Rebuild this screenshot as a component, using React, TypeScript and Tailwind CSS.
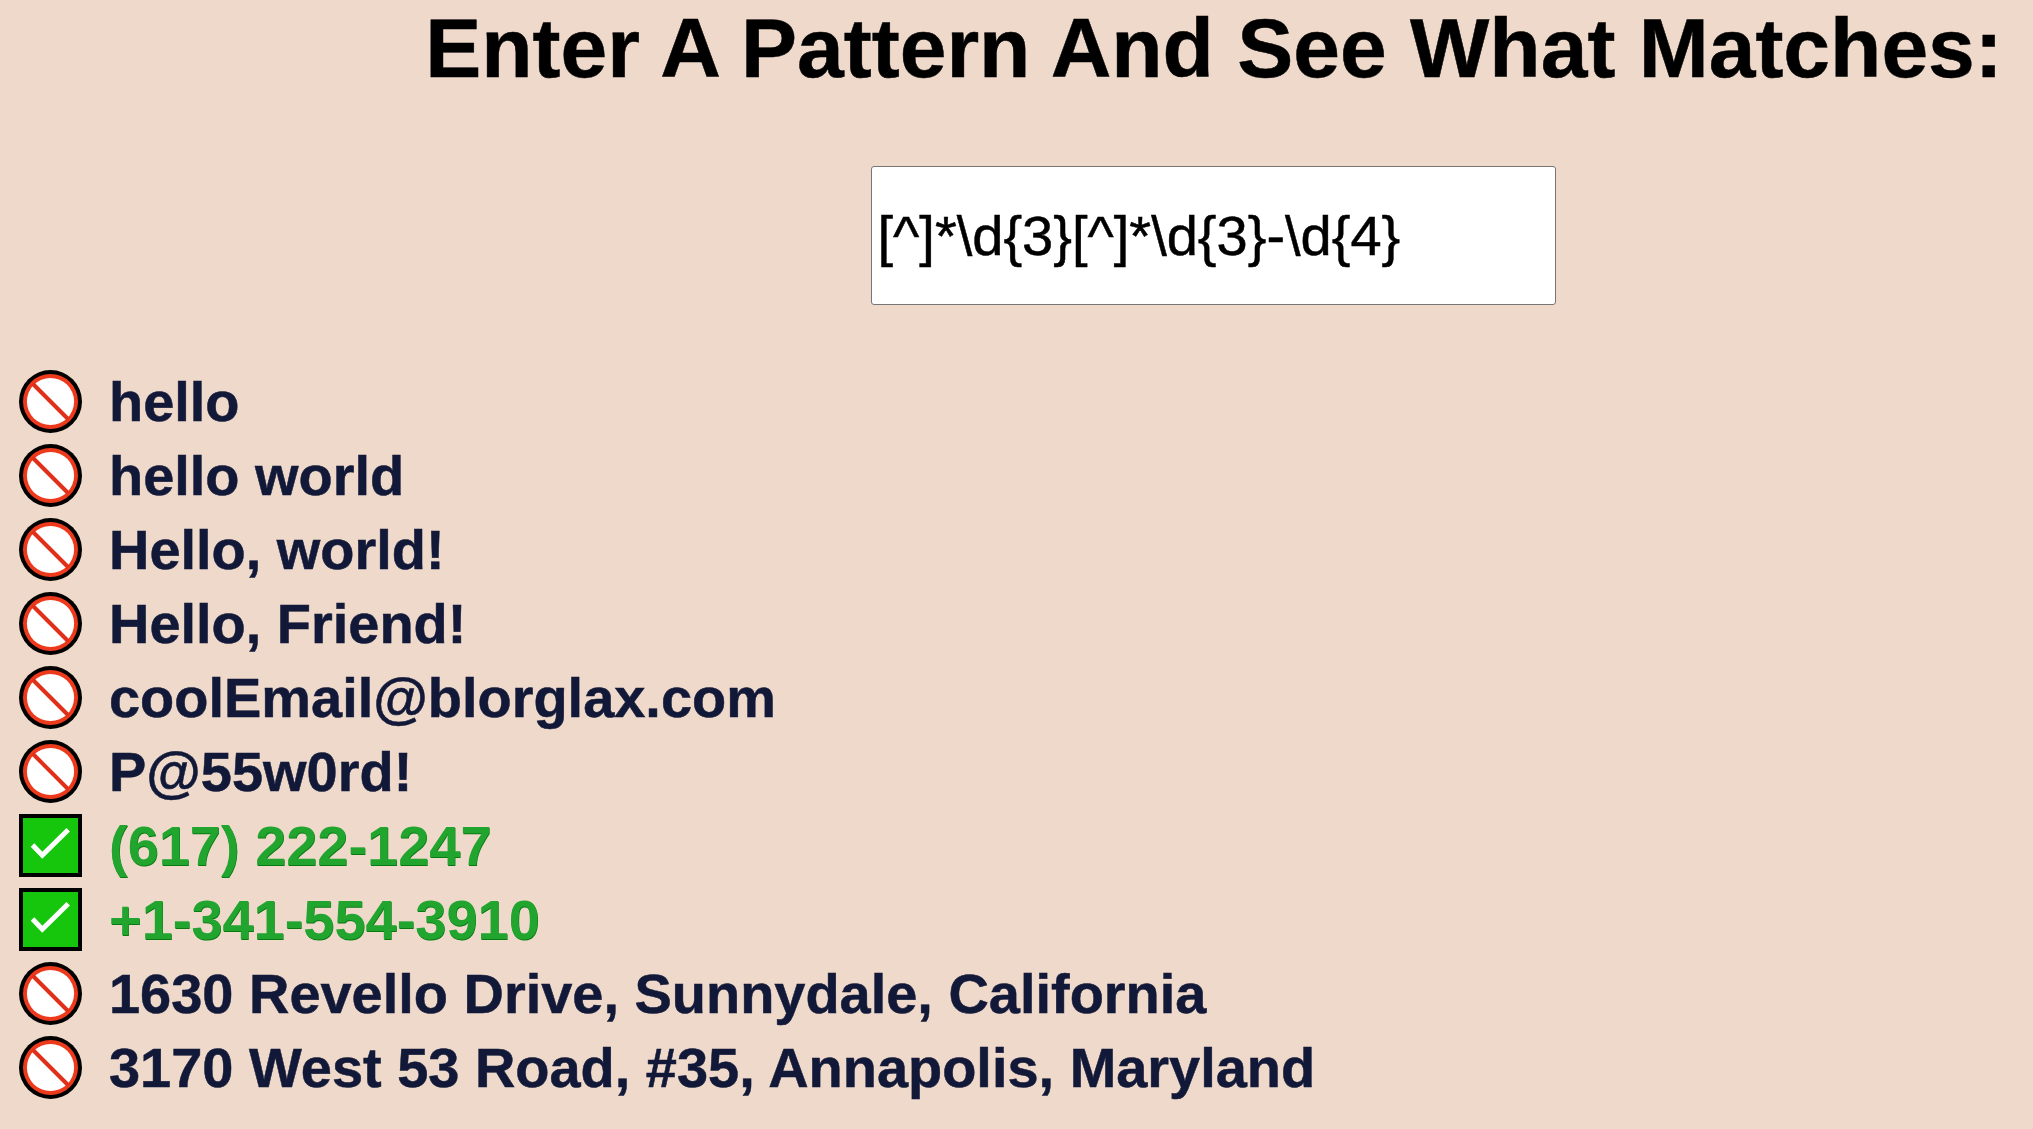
const samples = [
  'hello',
  'hello world',
  'Hello, world!',
  'Hello, Friend!',
  'coolEmail@blorglax.com',
  'P@55w0rd!',
  '(617) 222-1247',
  '+1-341-554-3910',
  '1630 Revello Drive, Sunnydale, California',
  '3170 West 53 Road, #35, Annapolis, Maryland',
];

const pattern = '[^]*\\d{3}[^]*\\d{3}-\\d{4}';

function NoMatchIcon() {
  return (
    <svg viewBox="0 0 63 63" className="mb-[2px] size-[63px] shrink-0" aria-hidden="true">
      <circle cx="31.5" cy="31.5" r="31.5" fill="#000" />
      <circle cx="31.5" cy="31.5" r="27.5" fill="#ee3a1c" />
      <circle cx="31.5" cy="31.5" r="23.6" fill="#fff" />
      <path d="M13.5 13.5 49.5 49.5" stroke="#e0301a" strokeWidth="4" />
    </svg>
  );
}

function MatchIcon() {
  return (
    <svg viewBox="0 0 63 63" className="mb-[2px] size-[63px] shrink-0" aria-hidden="true">
      <path d="M0 0h63v63H0z" fill="#000" />
      <path d="M4 4h55v55H4z" fill="#16c60c" />
      <path d="M13.5 31 23.3 41.2 49.2 15.8" fill="none" stroke="#fff" strokeWidth="5" />
    </svg>
  );
}

export default function App() {
  const regex = new RegExp(pattern);
  return (
    <main className="h-[1129px] w-full overflow-hidden bg-[#eed9cb] font-['Liberation_Sans',Arial,sans-serif]">
      <header className="ml-[393px] flex flex-col items-center">
        <h1 className="h-[166px] pl-[2px] text-[84px] leading-[96px] font-bold whitespace-nowrap text-black [-webkit-text-stroke:0.5px_black]">
          Enter A Pattern And See What Matches:
        </h1>
        <input
          className="block h-[139px] w-[685px] rounded-[3px] border border-[#767676] bg-white pr-[5px] pl-[6px] text-[56px] text-black outline-none [-webkit-text-stroke:0.5px_black]"
          defaultValue={pattern}
          spellCheck={false}
        />
      </header>
      <ul className="mt-[60px] ml-[19px]">
        {samples.map((text) => {
          const ok = regex.test(text);
          return (
            <li
              key={text}
              className={`flex h-[74px] items-center gap-[27px] text-[55.95px] leading-[74px] font-bold whitespace-nowrap ${
                ok
                  ? 'text-[#22a52f] [text-shadow:0.5px_1px_0_#087a10]'
                  : 'text-[#121938] [-webkit-text-stroke:0.5px_#121938]'
              }`}
            >
              {ok ? <MatchIcon /> : <NoMatchIcon />}
              <span>{text}</span>
            </li>
          );
        })}
      </ul>
    </main>
  );
}
